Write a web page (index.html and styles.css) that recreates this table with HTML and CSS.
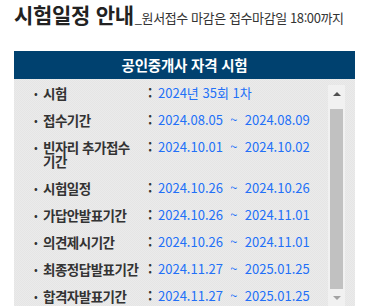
FILE: index.html
```html
<!DOCTYPE html>
<html lang="ko">
<head>
<meta charset="utf-8">
<link rel="stylesheet" href="styles.css">
</head>
<body>
<div class="page">
  <h1 class="title"><span class="title-main">시험일정 안내</span><span class="title-sub">_원서접수 마감은 접수마감일 18:00까지</span></h1>
  <div class="box">
    <div class="box-head">공인중개사 자격 시험</div>
    <div class="box-body">
      <div class="list">
        <div class="row"><span class="bullet">•</span><span class="label">시험</span><span class="colon">:</span><span class="value">2024년 35회 1차</span></div>
        <div class="row"><span class="bullet">•</span><span class="label">접수기간</span><span class="colon">:</span><span class="value">2024.08.05 &nbsp;~&nbsp; 2024.08.09</span></div>
        <div class="row"><span class="bullet">•</span><span class="label">빈자리 추가접수 기간</span><span class="colon">:</span><span class="value">2024.10.01 &nbsp;~&nbsp; 2024.10.02</span></div>
        <div class="row"><span class="bullet">•</span><span class="label">시험일정</span><span class="colon">:</span><span class="value">2024.10.26 &nbsp;~&nbsp; 2024.10.26</span></div>
        <div class="row"><span class="bullet">•</span><span class="label">가답안발표기간</span><span class="colon">:</span><span class="value">2024.10.26 &nbsp;~&nbsp; 2024.11.01</span></div>
        <div class="row"><span class="bullet">•</span><span class="label">의견제시기간</span><span class="colon">:</span><span class="value">2024.10.26 &nbsp;~&nbsp; 2024.11.01</span></div>
        <div class="row"><span class="bullet">•</span><span class="label">최종정답발표기간</span><span class="colon">:</span><span class="value">2024.11.27 &nbsp;~&nbsp; 2025.01.25</span></div>
        <div class="row"><span class="bullet">•</span><span class="label">합격자발표기간</span><span class="colon">:</span><span class="value">2024.11.27 &nbsp;~&nbsp; 2025.01.25</span></div>
      </div>
      <div class="scrollbar">
        <div class="sb-btn"><span class="arrow-up"></span></div>
        <div class="sb-track"><div class="sb-thumb"></div></div>
        <div class="sb-btn"><span class="arrow-down"></span></div>
      </div>
    </div>
  </div>
</div>
</body>
</html>
```
FILE: styles.css
```css
html, body {
  margin: 0;
  padding: 0;
  overflow: hidden;
  background: #fff;
}
body {
  font-family: "Noto Sans CJK KR", "Noto Sans", sans-serif;
  color: #333;
}
.page {
  padding: 0 14px;
}
.title {
  margin: 0;
  padding-top: 2px;
  height: 49px;
  display: flex;
  align-items: baseline;
  white-space: nowrap;
}
.title-main {
  font-size: 21px;
  font-weight: 700;
  letter-spacing: -0.3px;
  color: #222;
  line-height: 24px;
}
.title-sub {
  font-size: 13px;
  font-weight: 400;
  letter-spacing: -0.4px;
  color: #333;
  margin-left: 1px;
}
.box {
  width: 341px;
}
.box-head {
  height: 28px;
  background: #00416f;
  color: #fff;
  font-size: 14.5px;
  font-weight: 700;
  line-height: 27px;
  text-align: center;
  letter-spacing: -0.2px;
}
.box-body {
  display: flex;
  align-items: flex-start;
  padding: 6px 10px 6px 10px;
  background-color: #e8e8e8;
  background-image: repeating-conic-gradient(#e5e5e5 0 25%, #ebebeb 0 50%);
  background-size: 2px 2px;
}
.list {
  flex: 1;
  height: 226px;
  margin-top: -3px;
  overflow: hidden;
}
.row {
  display: grid;
  grid-template-columns: 10px 9px 103px 12px 1fr;
  padding: 4px 0 9px;
  line-height: 14px;
  font-size: 13px;
}
.bullet {
  grid-column: 2;
  font-size: 11px;
  color: #333;
}
.label {
  grid-column: 3;
  font-size: 13.5px;
  color: #333;
  font-weight: 700;
  letter-spacing: -0.5px;
  word-break: keep-all;
}
.colon {
  grid-column: 4;
  font-weight: 700;
  color: #333;
  padding-left: 2px;
}
.value {
  grid-column: 5;
  color: #2270f8;
  white-space: nowrap;
}
.scrollbar {
  width: 17px;
  height: 221px;
  background: #f1f1f1;
  display: flex;
  flex-direction: column;
}
.sb-btn {
  height: 17px;
  display: flex;
  align-items: center;
  justify-content: center;
}
.arrow-up {
  width: 0;
  height: 0;
  border-left: 4px solid transparent;
  border-right: 4px solid transparent;
  border-bottom: 4px solid #505050;
}
.arrow-down {
  width: 0;
  height: 0;
  border-left: 4px solid transparent;
  border-right: 4px solid transparent;
  border-top: 4px solid #a3a3a3;
}
.sb-track {
  flex: 1;
  display: flex;
  flex-direction: column;
  justify-content: flex-end;
  padding: 0 2px;
}
.sb-thumb {
  height: 180px;
  background: #c1c1c1;
}
```
